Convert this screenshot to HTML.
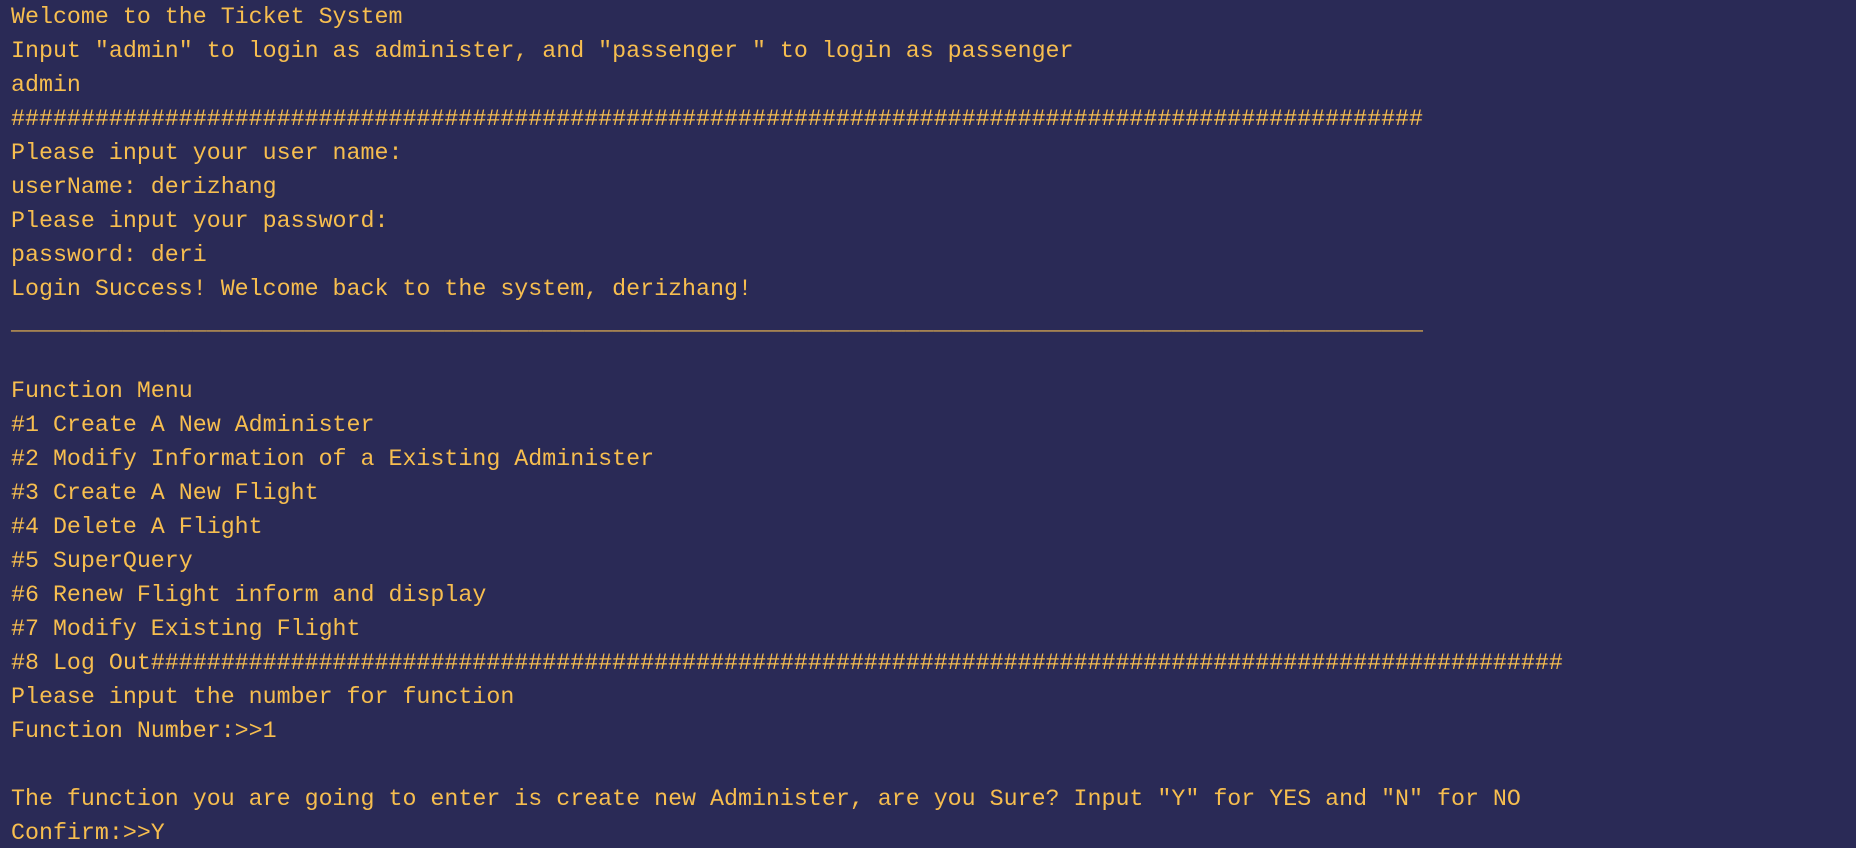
<!DOCTYPE html>
<html><head><meta charset="utf-8"><style>
html,body{margin:0;padding:0;background:#2a2a56;width:1856px;height:848px;overflow:hidden}
pre{margin:0;padding:0 0 0 11px;font-family:"Liberation Mono",monospace;font-size:23.3px;line-height:34px;color:#f7be4f;white-space:pre}
</style></head><body><pre>Welcome to the Ticket System
Input "admin" to login as administer, and "passenger " to login as passenger
admin
#####################################################################################################
Please input your user name:
userName: derizhang
Please input your password:
password: deri
Login Success! Welcome back to the system, derizhang!
_____________________________________________________________________________________________________

Function Menu
#1 Create A New Administer
#2 Modify Information of a Existing Administer
#3 Create A New Flight
#4 Delete A Flight
#5 SuperQuery
#6 Renew Flight inform and display
#7 Modify Existing Flight
#8 Log Out#####################################################################################################
Please input the number for function
Function Number:&gt;&gt;1

The function you are going to enter is create new Administer, are you Sure? Input "Y" for YES and "N" for NO
Confirm:&gt;&gt;Y</pre></body></html>
